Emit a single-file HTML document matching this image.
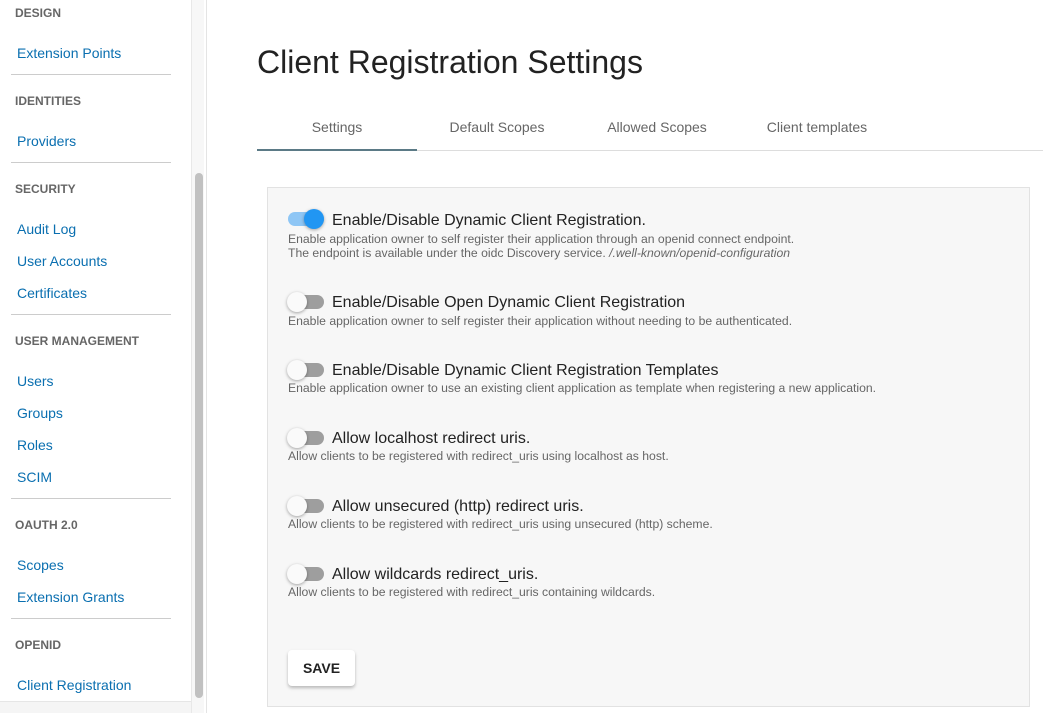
<!DOCTYPE html>
<html><head><style>
*{margin:0;padding:0;box-sizing:border-box}
body{width:1043px;height:713px;overflow:hidden;background:#fff;font-family:"Liberation Sans",Arial,sans-serif;position:relative}
.a{position:absolute;white-space:nowrap}
.h{font-size:12px;font-weight:bold;color:#666;left:15px}
.l{font-size:14px;color:#0a6fb0;left:17px}
.d{position:absolute;left:11px;width:160px;height:1px;background:#ccc}
.t{font-size:14px;color:#666;width:160px;text-align:center;top:119px}
.tl{font-size:16px;color:#222;left:332px}
.ds{font-size:12.2px;color:#666;left:288px}
.tr{position:absolute;left:288px;width:36px;height:14px;border-radius:7px;background:#9e9e9e}
.kn{position:absolute;width:20px;height:20px;border-radius:50%;background:#fafafa;box-shadow:0 1px 3px rgba(0,0,0,.35)}
</style></head><body>
<div class="a h" style="top:6px">DESIGN</div>
<div class="a l" style="top:45px">Extension Points</div>
<div class="d" style="top:74px"></div>
<div class="a h" style="top:94px">IDENTITIES</div>
<div class="a l" style="top:133px">Providers</div>
<div class="d" style="top:162px"></div>
<div class="a h" style="top:182px">SECURITY</div>
<div class="a l" style="top:221px">Audit Log</div>
<div class="a l" style="top:253px">User Accounts</div>
<div class="a l" style="top:285px">Certificates</div>
<div class="d" style="top:314px"></div>
<div class="a h" style="top:334px">USER MANAGEMENT</div>
<div class="a l" style="top:373px">Users</div>
<div class="a l" style="top:405px">Groups</div>
<div class="a l" style="top:437px">Roles</div>
<div class="a l" style="top:469px">SCIM</div>
<div class="d" style="top:498px"></div>
<div class="a h" style="top:518px">OAUTH 2.0</div>
<div class="a l" style="top:557px">Scopes</div>
<div class="a l" style="top:589px">Extension Grants</div>
<div class="d" style="top:618px"></div>
<div class="a h" style="top:638px">OPENID</div>
<div class="a l" style="top:677px">Client Registration</div>
<div style="position:absolute;left:0;top:701px;width:191px;height:12px;background:#f5f5f5;border-top:1px solid #e6e6e6"></div>
<div style="position:absolute;left:191px;top:0;width:13px;height:713px;background:#f7f7f7;border-left:1px solid #e8e8e8"></div>
<div style="position:absolute;left:195px;top:173px;width:8px;height:525px;border-radius:4px;background:#c1c1c1"></div>
<div style="position:absolute;left:206px;top:0;width:1px;height:713px;background:#e4e4e4"></div>

<div class="a" style="left:257px;top:44px;font-size:32px;color:#222">Client Registration Settings</div>
<div class="a t" style="left:257px">Settings</div>
<div class="a t" style="left:417px">Default Scopes</div>
<div class="a t" style="left:577px">Allowed Scopes</div>
<div class="a t" style="left:737px">Client templates</div>
<div style="position:absolute;left:257px;top:150px;width:786px;height:1px;background:#ddd"></div>
<div style="position:absolute;left:257px;top:149px;width:160px;height:2px;background:#5b7a86"></div>

<div style="position:absolute;left:267px;top:187px;width:763px;height:520px;background:#f7f7f7;border:1px solid #e2e2e2"></div>

<div class="tr" style="top:212px;background:#8ec6f5"></div><div class="kn" style="left:304px;top:209px;background:#2196f3"></div>
<div class="a tl" style="top:212px">Enable/Disable Dynamic Client Registration.</div>
<div class="a ds" style="top:232px">Enable application owner to self register their application through an openid connect endpoint.</div>
<div class="a ds" style="top:246px">The endpoint is available under the oidc Discovery service. <i>/.well-known/openid-configuration</i></div>

<div class="tr" style="top:295px"></div><div class="kn" style="left:287px;top:292px"></div>
<div class="a tl" style="top:294px">Enable/Disable Open Dynamic Client Registration</div>
<div class="a ds" style="top:314px">Enable application owner to self register their application without needing to be authenticated.</div>

<div class="tr" style="top:363px"></div><div class="kn" style="left:287px;top:360px"></div>
<div class="a tl" style="top:362px">Enable/Disable Dynamic Client Registration Templates</div>
<div class="a ds" style="top:381px">Enable application owner to use an existing client application as template when registering a new application.</div>

<div class="tr" style="top:431px"></div><div class="kn" style="left:287px;top:428px"></div>
<div class="a tl" style="top:430px">Allow localhost redirect uris.</div>
<div class="a ds" style="top:449px">Allow clients to be registered with redirect_uris using localhost as host.</div>

<div class="tr" style="top:499px"></div><div class="kn" style="left:287px;top:496px"></div>
<div class="a tl" style="top:498px">Allow unsecured (http) redirect uris.</div>
<div class="a ds" style="top:517px">Allow clients to be registered with redirect_uris using unsecured (http) scheme.</div>

<div class="tr" style="top:567px"></div><div class="kn" style="left:287px;top:564px"></div>
<div class="a tl" style="top:566px">Allow wildcards redirect_uris.</div>
<div class="a ds" style="top:585px">Allow clients to be registered with redirect_uris containing wildcards.</div>

<div style="position:absolute;left:288px;top:650px;width:67px;height:36px;background:#fff;border-radius:4px;box-shadow:0 2px 3px rgba(0,0,0,.25);font-size:14px;font-weight:bold;color:#222;text-align:center;line-height:36px">SAVE</div>
</body></html>
